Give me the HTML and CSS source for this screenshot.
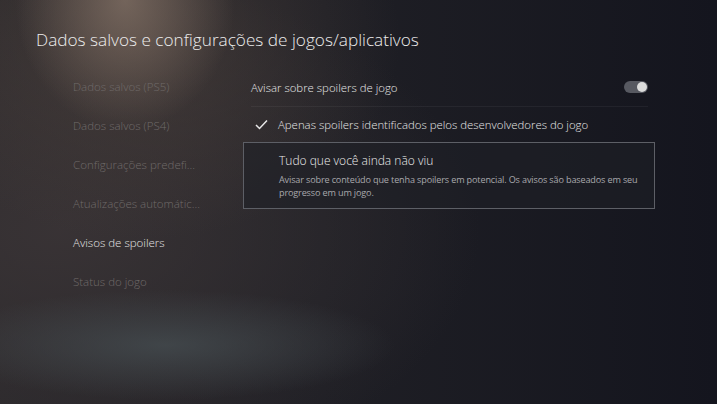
FILE: index.html
```html
<!DOCTYPE html>
<html lang="pt">
<head>
    <meta charset="UTF-8">
    <meta name="viewport" content="width=device-width, initial-scale=1.0">
    <title>Dados salvos e configurações de jogos/aplicativos</title>
    <link rel="stylesheet" href="styles.css">
</head>
<body>
    <div class="screen">
        <h1 class="title">Dados salvos e configurações de jogos/aplicativos</h1>
        <div class="content">
            <ul class="menu">
                <li>Dados salvos (PS5)</li>
                <li>Dados salvos (PS4)</li>
                <li>Configurações predefi...</li>
                <li>Atualizações automátic...</li>
                <li class="active">Avisos de spoilers</li>
                <li>Status do jogo</li>
            </ul>
            <div class="panel">
                <div class="row toggle-row">
                    <span>Avisar sobre spoilers de jogo</span>
                    <span class="toggle"><span class="knob"></span></span>
                </div>
                <div class="row option">
                    <svg class="check" width="13" height="11" viewBox="0 0 13 11">
                        <path d="M1 6 L4.5 9.5 L12 1.5" fill="none" stroke="#e8e8e8" stroke-width="1.5"/>
                    </svg>
                    <span>Apenas spoilers identificados pelos desenvolvedores do jogo</span>
                </div>
                <div class="option-box">
                    <div class="option-title">Tudo que você ainda não viu</div>
                    <div class="option-desc">Avisar sobre conteúdo que tenha spoilers em potencial. Os avisos são baseados em seu progresso em um jogo.</div>
                </div>
            </div>
        </div>
    </div>
</body>
</html>
```

FILE: styles.css
```css
html, body {
    margin: 0;
    padding: 0;
    height: 100%;
}
body {
    font-family: "Open Sans", "Noto Sans", sans-serif;
    color: #e6e6e6;
    overflow: hidden;
    background-color: #15161e;
    background-image:
        radial-gradient(ellipse 110px 130px at 125px 0px, rgba(134, 116, 104, 0.75), rgba(134, 116, 104, 0) 100%),
        radial-gradient(ellipse 260px 200px at 140px 40px, rgba(80, 68, 62, 0.6), rgba(80, 68, 62, 0) 100%),
        radial-gradient(ellipse 230px 55px at 165px 345px, rgba(70, 78, 82, 0.75), rgba(70, 78, 82, 0) 100%),
        radial-gradient(ellipse 420px 260px at 60px 230px, rgba(58, 52, 54, 0.9), rgba(58, 52, 54, 0) 100%),
        linear-gradient(90deg, #2a282b 0%, #1f1f25 45%, #14151e 100%);
}
.screen {
    padding: 28px 0 0 36px;
}
.title {
    margin: 0;
    font-size: 17.2px;
    font-weight: 300;
    color: #ececec;
    line-height: 24px;
}
.content {
    display: flex;
    margin-top: 22px;
}
.menu {
    list-style: none;
    margin: 0;
    padding: 0 0 0 37px;
    width: 178px;
}
.menu li {
    font-size: 11.5px;
    font-weight: 300;
    color: #6f6a69;
    height: 39px;
    line-height: 26px;
    white-space: nowrap;
}
.menu li.active {
    color: #e4e4e4;
}
.panel {
    width: 412px;
    margin-left: -8px;
}
.row {
    display: flex;
    align-items: center;
    font-size: 11.4px;
    font-weight: 300;
}
.toggle-row {
    justify-content: space-between;
    margin: 0 7px 0 8px;
    height: 26px;
    padding-bottom: 6px;
    border-bottom: 1px solid rgba(255, 255, 255, 0.05);
}
.toggle {
    width: 24px;
    height: 12px;
    border-radius: 6px;
    background: #575961;
    display: flex;
    justify-content: flex-end;
    align-items: center;
    padding: 0 1px;
    box-sizing: border-box;
}
.knob {
    width: 10px;
    height: 10px;
    border-radius: 50%;
    background: #dcdcdc;
}
.option {
    height: 35px;
    padding-left: 12px;
}
.check {
    margin-right: 10px;
}
.option-box {
    border: 1px solid #5d5f66;
    background: rgba(30, 31, 38, 0.6);
    padding: 9px 12px 9px 35px;
}
.option-title {
    font-size: 12px;
    font-weight: 300;
    color: #ececec;
    line-height: 18px;
}
.option-desc {
    font-size: 9.1px;
    letter-spacing: -0.15px;
    color: #a8a8ac;
    line-height: 13px;
    margin-top: 3px;
}
```
